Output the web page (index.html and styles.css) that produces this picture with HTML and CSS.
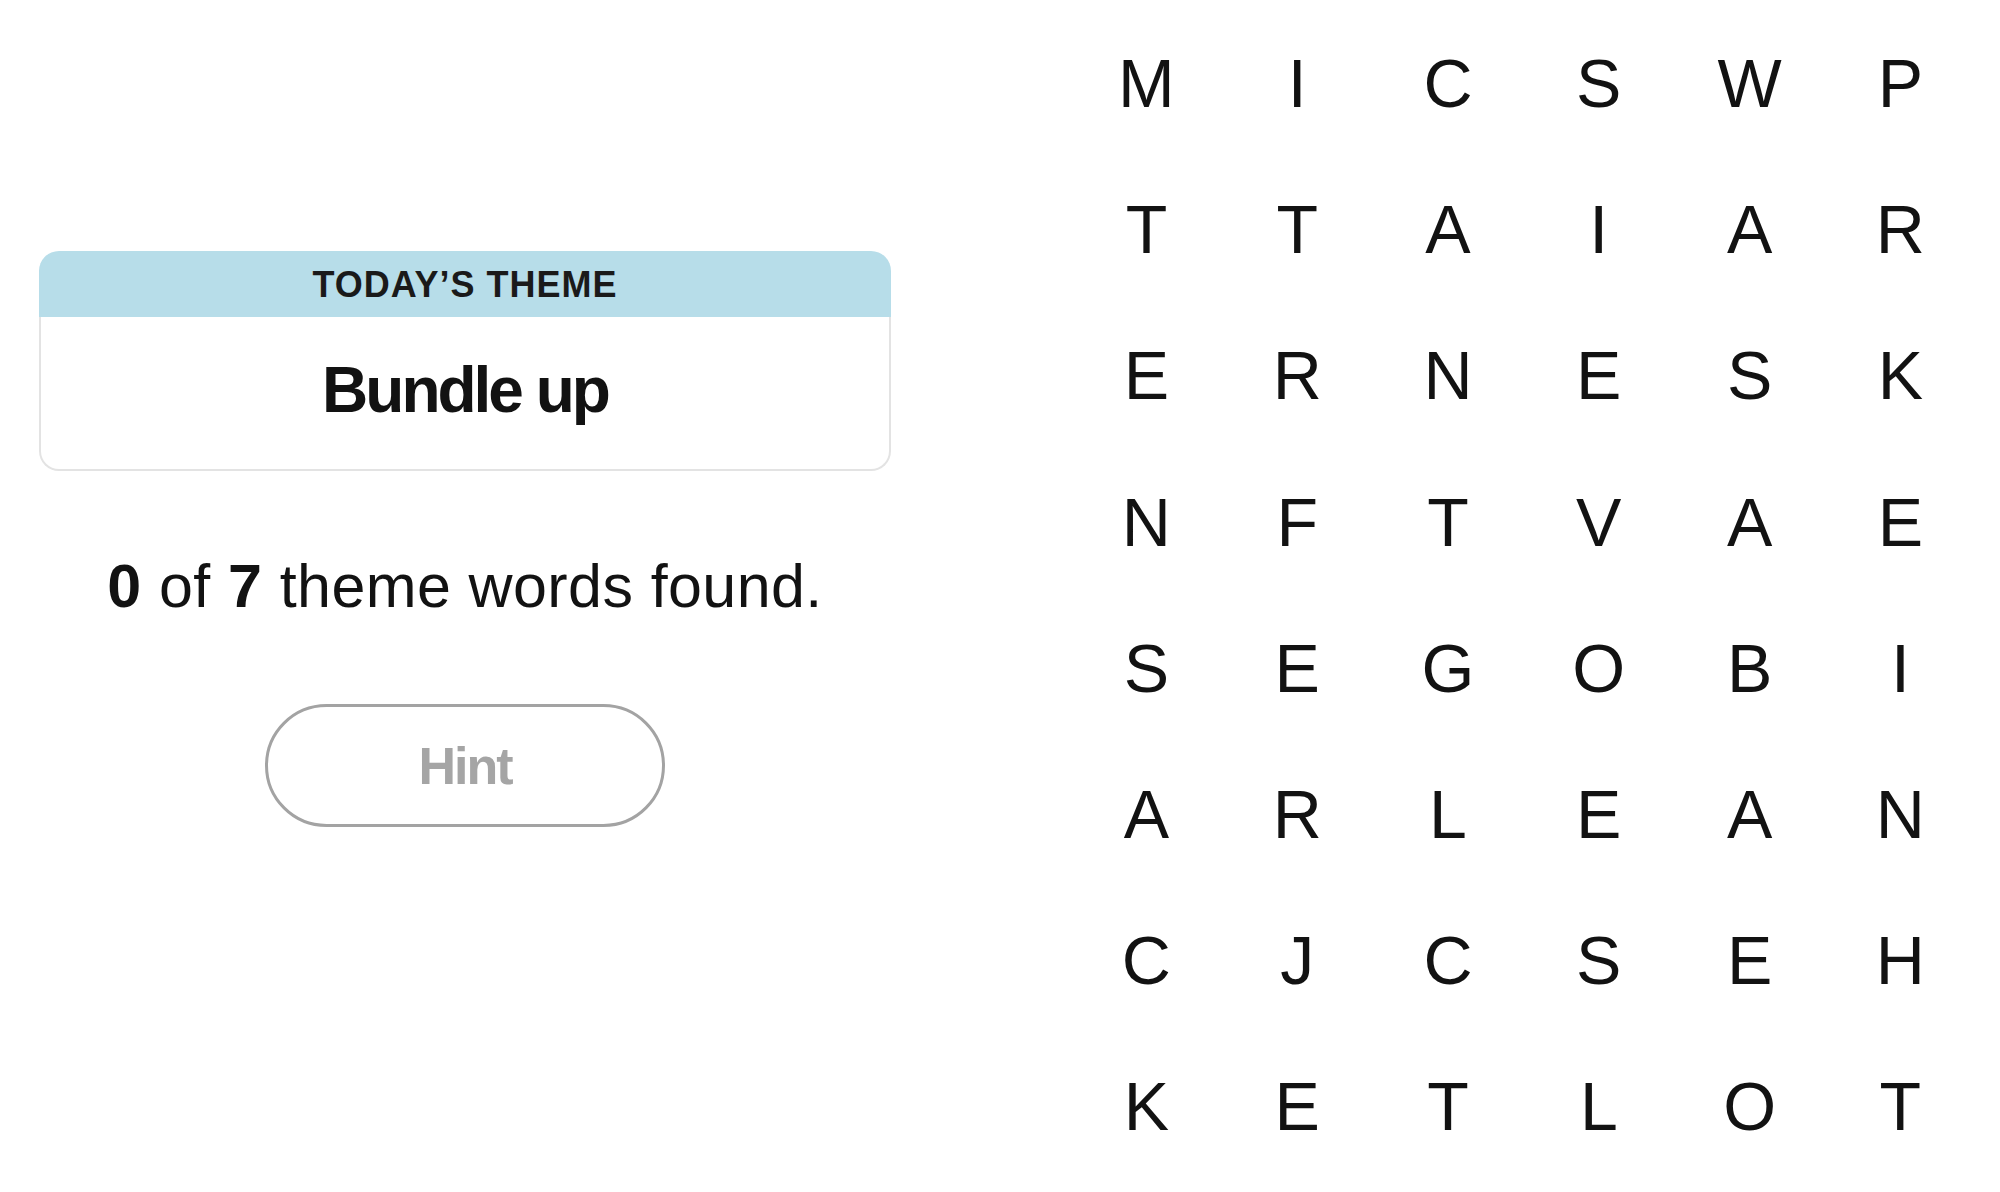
FILE: index.html
```html
<!DOCTYPE html>
<html lang="en">
<head>
<meta charset="utf-8">
<title>Strands</title>
<link rel="stylesheet" href="styles.css">
</head>
<body>
<main class="page">
  <section class="side">
    <div class="theme-card">
      <div class="theme-head">TODAY’S THEME</div>
      <div class="theme-body">Bundle up</div>
    </div>
    <p class="found"><b>0</b> of <b>7</b> theme words found.</p>
    <button class="hint" type="button">Hint</button>
  </section>
  <section class="board">
    <span class="cell">M</span><span class="cell">I</span><span class="cell">C</span><span class="cell">S</span><span class="cell">W</span><span class="cell">P</span>
    <span class="cell">T</span><span class="cell">T</span><span class="cell">A</span><span class="cell">I</span><span class="cell">A</span><span class="cell">R</span>
    <span class="cell">E</span><span class="cell">R</span><span class="cell">N</span><span class="cell">E</span><span class="cell">S</span><span class="cell">K</span>
    <span class="cell">N</span><span class="cell">F</span><span class="cell">T</span><span class="cell">V</span><span class="cell">A</span><span class="cell">E</span>
    <span class="cell">S</span><span class="cell">E</span><span class="cell">G</span><span class="cell">O</span><span class="cell">B</span><span class="cell">I</span>
    <span class="cell">A</span><span class="cell">R</span><span class="cell">L</span><span class="cell">E</span><span class="cell">A</span><span class="cell">N</span>
    <span class="cell">C</span><span class="cell">J</span><span class="cell">C</span><span class="cell">S</span><span class="cell">E</span><span class="cell">H</span>
    <span class="cell">K</span><span class="cell">E</span><span class="cell">T</span><span class="cell">L</span><span class="cell">O</span><span class="cell">T</span>
  </section>
</main>
</body>
</html>
```

FILE: styles.css
```css
* { box-sizing: border-box; }

html, body {
  margin: 0;
  padding: 0;
  background: #ffffff;
}

body {
  font-family: "Liberation Sans", Arial, Helvetica, sans-serif;
  color: #121212;
  width: 2000px;
  height: 1192px;
  overflow: hidden;
}

.page {
  display: flex;
  align-items: flex-start;
}

.side {
  width: 852px;
  margin-left: 39px;
  margin-top: 251px;
  display: flex;
  flex-direction: column;
  align-items: center;
}

.theme-card {
  width: 852px;
  display: flex;
  flex-direction: column;
}

.theme-head {
  height: 66px;
  background: #b7dde9;
  border-radius: 20px 20px 0 0;
  display: flex;
  align-items: center;
  justify-content: center;
  font-size: 36px;
  font-weight: 700;
  letter-spacing: 1px;
  color: #1a1a1a;
  padding-top: 2px;
}

.theme-body {
  height: 154px;
  border: 2px solid #e3e3e3;
  border-top: none;
  border-radius: 0 0 20px 20px;
  text-align: center;
  font-size: 64px;
  line-height: 64px;
  font-weight: 700;
  letter-spacing: -3px;
  padding-top: 41px;
}

.found {
  margin: 80px 0 0;
  font-size: 61px;
  line-height: 70px;
  letter-spacing: 0.4px;
  text-align: center;
  color: #121212;
}

.found b {
  font-weight: 700;
}

.hint {
  margin-top: 83px;
  width: 400px;
  height: 123px;
  border: 3px solid #a3a3a3;
  border-radius: 62px;
  background: #ffffff;
  font-family: "Liberation Sans", Arial, Helvetica, sans-serif;
  font-size: 52px;
  line-height: 52px;
  font-weight: 700;
  letter-spacing: -2px;
  color: #a5a5a5;
  padding: 0;
  display: flex;
  align-items: center;
  justify-content: center;
}

.board {
  margin-left: 180px;
  margin-top: 10px;
  display: grid;
  grid-template-columns: repeat(6, 150.8px);
  grid-auto-rows: 146.2px;
}

.cell {
  display: block;
  text-align: center;
  font-size: 68px;
  line-height: 146.2px;
  color: #121212;
}
```
